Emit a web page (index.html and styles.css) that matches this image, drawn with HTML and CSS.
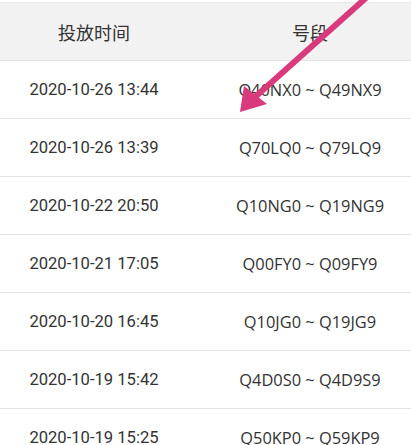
FILE: index.html
```html
<!DOCTYPE html>
<html lang="zh">
<head>
<meta charset="utf-8">
<link rel="stylesheet" href="styles.css">
</head>
<body>
<div class="page">
  <div class="table">
    <div class="row head"><div class="c1">投放时间</div><div class="c2">号段</div></div>
    <div class="row"><div class="c1">2020-10-26 13:44</div><div class="c2">Q40NX0 ~ Q49NX9</div></div>
    <div class="row"><div class="c1">2020-10-26 13:39</div><div class="c2">Q70LQ0 ~ Q79LQ9</div></div>
    <div class="row"><div class="c1">2020-10-22 20:50</div><div class="c2">Q10NG0 ~ Q19NG9</div></div>
    <div class="row"><div class="c1">2020-10-21 17:05</div><div class="c2">Q00FY0 ~ Q09FY9</div></div>
    <div class="row"><div class="c1">2020-10-20 16:45</div><div class="c2">Q10JG0 ~ Q19JG9</div></div>
    <div class="row"><div class="c1">2020-10-19 15:42</div><div class="c2">Q4D0S0 ~ Q4D9S9</div></div>
    <div class="row"><div class="c1">2020-10-19 15:25</div><div class="c2">Q50KP0 ~ Q59KP9</div></div>
  </div>
  <svg class="arrow" width="411" height="130" viewBox="0 0 411 130">
    <line x1="367" y1="-3" x2="254" y2="98" stroke="#d93a7c" stroke-width="6" stroke-linecap="butt"/>
    <polygon points="240,112 244,86 267,104" fill="#d93a7c"/>
  </svg>
</div>
</body>
</html>
```
FILE: styles.css
```css
html, body { margin: 0; padding: 0; background: #fff; }
body { width: 411px; height: 445px; overflow: hidden; }
.page { position: relative; width: 411px; height: 445px; overflow: hidden; }
.table { padding-top: 2px; }
.row {
  display: grid;
  grid-template-columns: 188px 244px;
  height: 58px;
  align-items: center;
  border-bottom: 1px solid #e4e4e4;
  box-sizing: border-box;
  font-family: Roboto, "Noto Sans CJK SC", sans-serif;
  font-size: 16.6px;
  color: #333;
}
.row > div { text-align: center; white-space: nowrap; }
.row .c2 { font-family: "Open Sans", "Noto Sans", sans-serif; font-size: 16.4px; }
.head {
  background: #f2f2f2;
  border-top: 1px solid #e6e6e6;
  height: 59px;
  font-family: "Noto Sans CJK SC", sans-serif;
  font-size: 18px;
}
.head .c2 { font-family: "Noto Sans CJK SC", sans-serif; font-size: 18px; }
.arrow { position: absolute; left: 0; top: 0; }
```
